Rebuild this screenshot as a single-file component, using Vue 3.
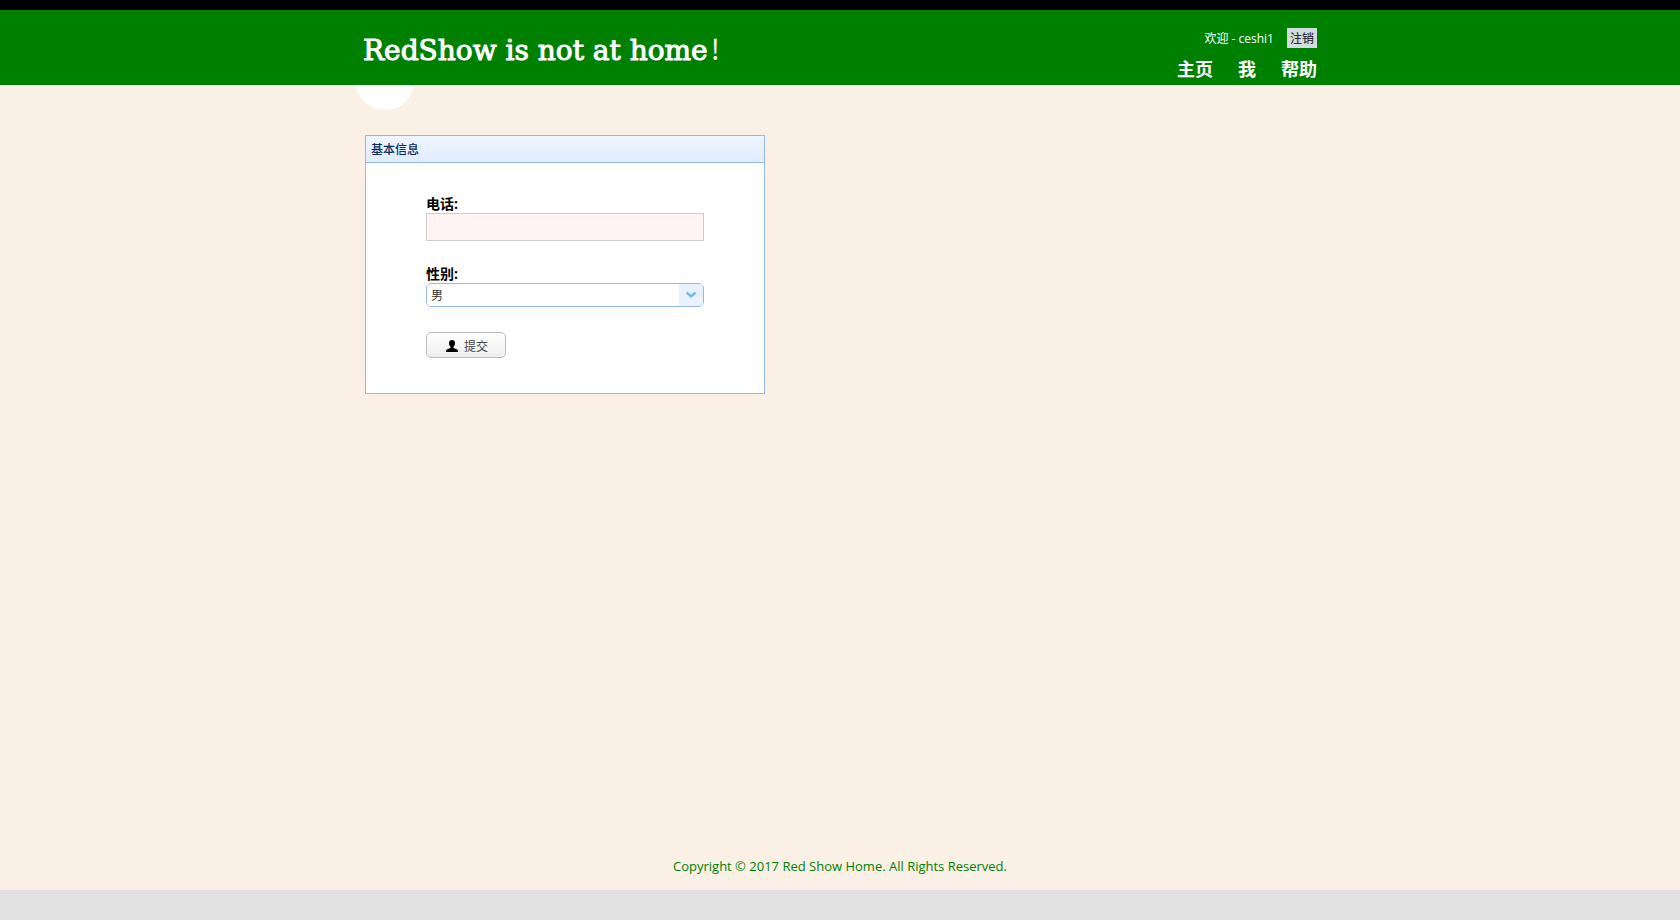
<script setup>
import { ref } from 'vue'

const phone = ref('')
const gender = ref('男')
const links = ['主页', '我', '帮助']
</script>

<template>
  <div class="page">
    <header class="header">
      <div class="bar">
        <h1 class="logo">RedShow is not at home<span class="mark">!</span></h1>
        <div class="side">
          <div class="login">
            <span class="welcome">欢迎 - ceshi1</span>
            <a class="logout" href="#">注销</a>
          </div>
          <nav class="nav">
            <a v-for="link in links" :key="link" href="#">{{ link }}</a>
          </nav>
        </div>
      </div>
    </header>
    <main class="main">
      <span class="disc"></span>
      <section class="panel">
        <h2 class="panel-title">基本信息</h2>
        <form class="form" @submit.prevent>
          <label class="label" for="phone">电话:</label>
          <input id="phone" v-model="phone" class="text" type="text" />
          <label class="label" for="gender">性别:</label>
          <div class="combo">
            <select id="gender" v-model="gender">
              <option>男</option>
              <option>女</option>
            </select>
            <span class="arrow">
              <svg width="12" height="8" viewBox="0 0 12 8">
                <path d="M1.5 1.5 6 5.5 10.5 1.5" fill="none" stroke="#70bdf2" stroke-width="2.4" />
              </svg>
            </span>
          </div>
          <button class="submit" type="submit">
            <svg width="12" height="12" viewBox="0 0 12 12">
              <path d="M6 0C4 0 3 1.2 3 3C3 4.6 3.6 6 4.5 6.8V8L1 9.2Q0 9.8 0 12H12Q12 9.8 11 9.2L7.5 8V6.8C8.4 6 9 4.6 9 3C9 1.2 8 0 6 0Z" fill="#000" />
            </svg>
            提交
          </button>
        </form>
      </section>
    </main>
    <footer class="footer">Copyright © 2017 Red Show Home. All Rights Reserved.</footer>
  </div>
</template>

<style>
html {
  background: #e1e1e1;
}
</style>

<style scoped>
.page {
  box-sizing: border-box;
  min-height: calc(100vh - 30px);
  display: flex;
  flex-direction: column;
  border-top: 10px solid #000;
  background: #faf0e6;
  font-family: "Open Sans", "Noto Sans CJK SC", sans-serif;
  font-size: 12px;
}

.header {
  position: relative;
  z-index: 1;
  background: #008000;
  color: #fff;
}

.bar {
  box-sizing: border-box;
  max-width: 960px;
  height: 75px;
  margin: 0 auto;
  padding: 0 3px;
  display: flex;
  justify-content: space-between;
}

.logo {
  margin: 0;
  font: 400 28px/76px "Rockwell", "DejaVu Serif", serif;
  -webkit-text-stroke: 1px #fff;
}

.mark {
  margin-left: 3px;
  font-family: "Noto Sans CJK SC", sans-serif;
  -webkit-text-stroke: 0;
}

.side {
  padding-top: 18px;
  display: flex;
  flex-direction: column;
  align-items: flex-end;
}

.login {
  display: flex;
  gap: 13px;
  line-height: 18px;
}

.welcome {
  padding-top: 2px;
}

.logout {
  padding: 2px 3px 0;
  background: #d3dce0;
  color: #333;
  font-weight: 500;
  text-decoration: none;
}

.nav {
  margin-top: 8px;
  display: flex;
  gap: 25px;
  font-size: 18px;
  font-weight: 700;
  line-height: 26px;
}

.nav a {
  color: #fff;
  text-decoration: none;
}

.main {
  position: relative;
  box-sizing: border-box;
  width: 100%;
  max-width: 960px;
  margin: 0 auto;
  padding: 50px 5px 0;
  flex: 1;
}

.disc {
  position: absolute;
  top: -35px;
  left: -5px;
  width: 60px;
  height: 60px;
  border-radius: 50%;
  background: #fff;
}

.panel {
  box-sizing: border-box;
  max-width: 400px;
  border: 1px solid #95b8e7;
  background: #fff;
}

.panel-title {
  margin: 0;
  padding: 6px 5px 4px;
  border-bottom: 1px solid #95b8e7;
  background: linear-gradient(#eff5ff, #e0ecff);
  color: #0e2d5f;
  font-size: 12px;
  font-weight: 500;
  line-height: 16px;
}

.form {
  padding: 32px 60px 35px;
  display: flex;
  flex-direction: column;
}

.label {
  color: #000;
  font-size: 14px;
  font-weight: 700;
  line-height: 18px;
}

.text {
  box-sizing: border-box;
  width: 100%;
  height: 28px;
  margin-bottom: 24px;
  padding: 0 4px;
  border: 1px solid #ccc;
  background: #fff3f3;
  font: inherit;
}

.combo {
  display: grid;
  grid-template-columns: 1fr 24px;
  height: 22px;
  margin-bottom: 25px;
  border: 1px solid #95b8e7;
  border-radius: 5px;
  overflow: hidden;
}

.combo select {
  grid-area: 1 / 1 / 2 / 3;
  appearance: none;
  padding: 0 4px;
  border: 0;
  background: #fff;
  color: #333;
  font: inherit;
}

.arrow {
  grid-area: 1 / 2;
  display: flex;
  align-items: center;
  justify-content: center;
  background: #e9f1ff;
  pointer-events: none;
}

.submit {
  align-self: flex-start;
  width: 80px;
  height: 26px;
  padding: 2px 0 0 2px;
  display: flex;
  align-items: center;
  justify-content: center;
  gap: 6px;
  border: 1px solid #bbb;
  border-radius: 5px;
  background: linear-gradient(#fff, #eee);
  color: #444;
  font: inherit;
}

.footer {
  padding: 0 16px 14px;
  color: #008000;
  font-size: 13px;
  line-height: 20px;
  text-align: center;
}
</style>
